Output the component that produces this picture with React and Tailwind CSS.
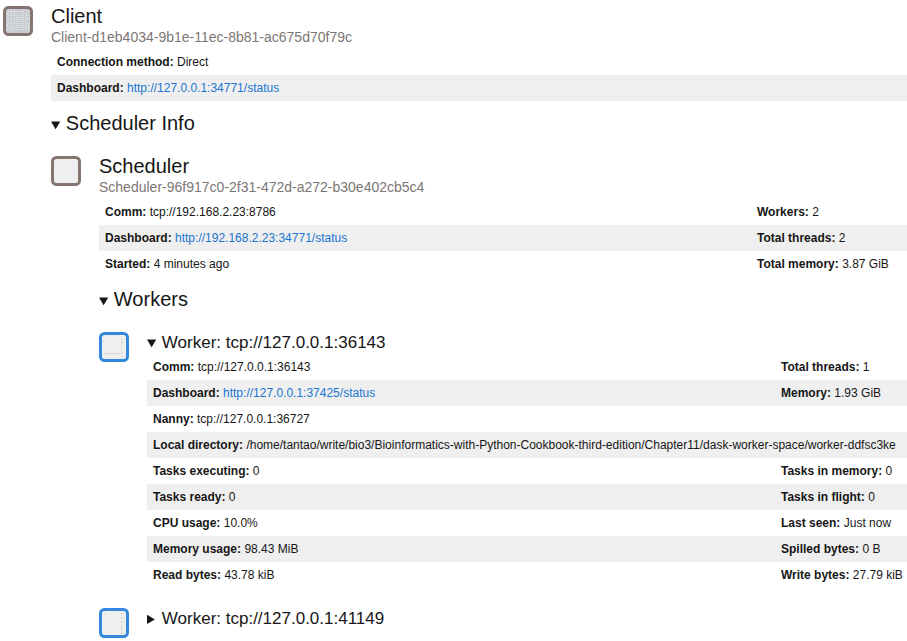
const evenDots = 'M4 2.5h22M4 6.5h22M4 10.5h22M4 14.5h22M4 18.5h22';
const oddDots = 'M3 4.5h9M18 4.5h6M3 8.5h22M3 12.5h12M18 12.5h6M3 16.5h22M3 20.5h22';

function Badge({ kind, dots }) {
  const border = kind === 'worker' ? '#3488dc' : '#857571';
  return (
    <svg className="mt-1.5 h-[30px] w-[30px] shrink-0" viewBox="0 0 30 30" aria-hidden="true">
      <rect x="1.5" y="1.5" width="27" height="27" rx="4" fill={kind === 'client' ? '#c9ccd1' : '#efefef'} stroke={border} strokeWidth="3" />
      {kind === 'client' && (
        <g stroke="#eef0f3" shapeRendering="crispEdges" transform="translate(1 3)">
          <path d={evenDots} strokeDasharray="1 2" />
          <path d={oddDots} strokeDasharray="1 2" />
        </g>
      )}
      {dots && <path d={dots} stroke="#c4c4c4" strokeDasharray="1 1" shapeRendering="crispEdges" />}
    </svg>
  );
}

function Row({ children }) {
  return <tr className="h-[26px] even:bg-[#efefef]">{children}</tr>;
}

function Cell({ label, value, href, span }) {
  return (
    <td className="whitespace-nowrap py-0 pl-1.5" colSpan={span}>
      <strong className="font-bold">{label}:</strong>{' '}
      {href ? <a href={href} className="text-[#1976d2] hover:underline">{href}</a> : value}
    </td>
  );
}

function Info({ rows, side }) {
  return (
    <table className="w-full table-fixed border-collapse text-xs">
      <colgroup>
        <col />
        {side && <col className={side} />}
      </colgroup>
      <tbody>
        {rows.map(([left, right]) => (
          <Row key={left.label}>
            <Cell {...left} span={side && !right ? 2 : undefined} />
            {right && <Cell {...right} />}
          </Row>
        ))}
      </tbody>
    </table>
  );
}

function Entity({ kind, name, id, children }) {
  return (
    <section className="flex gap-[18px]">
      <Badge kind={kind} />
      <div className="min-w-0 grow pt-1">
        <h3 className="text-xl leading-6">{name}</h3>
        <p className="mb-[3px] text-sm leading-[18px] text-[#7d7674]">{id}</p>
        {children}
      </div>
    </section>
  );
}

function Section({ title, children }) {
  return (
    <details open>
      <summary className="mb-[15px] h-[34px] pt-2.5 text-sm leading-6">
        <h3 className="inline text-xl leading-6">{title}</h3>
      </summary>
      {children}
    </details>
  );
}

function Worker({ address, open, dots, children }) {
  return (
    <section className="mb-[14px] flex gap-[18px]">
      <Badge kind="worker" dots={dots} />
      <details open={open} className="min-w-0 grow">
        <summary className="h-7 pt-[5px] text-sm leading-6">
          <h4 className="inline text-[17px] leading-6">Worker: {address}</h4>
        </summary>
        {children}
      </details>
    </section>
  );
}

const clientRows = [
  [{ label: 'Connection method', value: 'Direct' }],
  [{ label: 'Dashboard', href: 'http://127.0.0.1:34771/status' }],
];

const schedulerRows = [
  [{ label: 'Comm', value: 'tcp://192.168.2.23:8786' }, { label: 'Workers', value: '2' }],
  [{ label: 'Dashboard', href: 'http://192.168.2.23:34771/status' }, { label: 'Total threads', value: '2' }],
  [{ label: 'Started', value: '4 minutes ago' }, { label: 'Total memory', value: '3.87 GiB' }],
];

const workerRows = [
  [{ label: 'Comm', value: 'tcp://127.0.0.1:36143' }, { label: 'Total threads', value: '1' }],
  [{ label: 'Dashboard', href: 'http://127.0.0.1:37425/status' }, { label: 'Memory', value: '1.93 GiB' }],
  [{ label: 'Nanny', value: 'tcp://127.0.0.1:36727' }],
  [{ label: 'Local directory', value: '/home/tantao/write/bio3/Bioinformatics-with-Python-Cookbook-third-edition/Chapter11/dask-worker-space/worker-ddfsc3ke' }],
  [{ label: 'Tasks executing', value: '0' }, { label: 'Tasks in memory', value: '0' }],
  [{ label: 'Tasks ready', value: '0' }, { label: 'Tasks in flight', value: '0' }],
  [{ label: 'CPU usage', value: '10.0%' }, { label: 'Last seen', value: 'Just now' }],
  [{ label: 'Memory usage', value: '98.43 MiB' }, { label: 'Spilled bytes', value: '0 B' }],
  [{ label: 'Read bytes', value: '43.78 kiB' }, { label: 'Write bytes', value: '27.79 kiB' }],
];

export default function App() {
  return (
    <main className="bg-white pl-[3px] font-['Liberation_Sans',Arial,sans-serif] text-[#161616]">
      <Entity kind="client" name="Client" id="Client-d1eb4034-9b1e-11ec-8b81-ac675d70f79c">
        <Info rows={clientRows} />
        <Section title="Scheduler Info">
          <Entity kind="scheduler" name="Scheduler" id="Scheduler-96f917c0-2f31-472d-a272-b30e402cb5c4">
            <Info rows={schedulerRows} side="w-[156px]" />
            <Section title="Workers">
              <Worker address="tcp://127.0.0.1:36143" open dots="M5 21.5h18M22.5 7v1M22.5 10v1M22.5 14v1M22.5 18v1M23.5 10v1M23.5 20v1M23.5 24v1M4.5 9v1">
                <Info rows={workerRows} side="w-[132px]" />
              </Worker>
              <Worker address="tcp://127.0.0.1:41149" dots="M22.5 5v1M22.5 9v1M22.5 13v1M22.5 17v1M22.5 19v1M22.5 21v1M22.5 25v1M24.5 5v1M24.5 10v1M24.5 24v1M5.5 5v1" />
            </Section>
          </Entity>
        </Section>
      </Entity>
    </main>
  );
}
